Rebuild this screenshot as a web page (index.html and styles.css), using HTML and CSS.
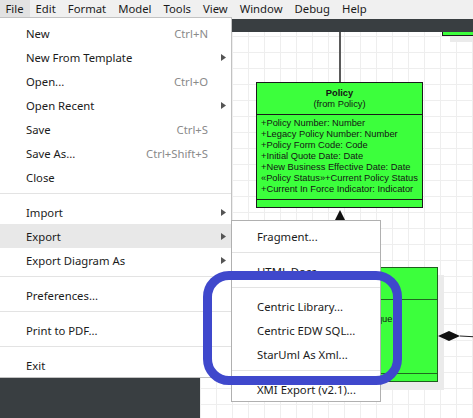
FILE: index.html
```html
<!DOCTYPE html>
<html>
<head>
<meta charset="utf-8">
<link rel="stylesheet" href="styles.css">
</head>
<body>
<div class="app">
  <div class="menubar">
    <span class="mb-item active">File</span>
    <span class="mb-item">Edit</span>
    <span class="mb-item">Format</span>
    <span class="mb-item">Model</span>
    <span class="mb-item">Tools</span>
    <span class="mb-item">View</span>
    <span class="mb-item">Window</span>
    <span class="mb-item">Debug</span>
    <span class="mb-item">Help</span>
  </div>
  <div class="toolbar"></div>
  <div class="workspace">
    <div class="sidepanel"></div>
    <div class="canvas">
      <div class="connector"></div>
      <div class="cls cls-policy">
        <div class="cls-head">
          <div class="cls-name">Policy</div>
          <div>(from Policy)</div>
        </div>
        <div class="cls-attrs">
          <div>+Policy Number: Number</div>
          <div>+Legacy Policy Number: Number</div>
          <div>+Policy Form Code: Code</div>
          <div>+Initial Quote Date: Date</div>
          <div>+New Business Effective Date: Date</div>
          <div>«Policy Status»+Current Policy Status</div>
          <div>+Current In Force Indicator: Indicator</div>
        </div>
        <div class="cls-ops"></div>
      </div>
      <svg class="gen-arrow" width="14" height="14" viewBox="0 0 14 14"><polygon points="7,0 14,14 0,14" fill="#111"/></svg>
      <div class="cls cls-two">
        <div class="cls-head"></div>
        <div class="cls-attrs cls-attrs-two">
          <div class="attr-hidden">&nbsp;</div>
          <div>Unique</div>
        </div>
        <div class="cls-ops"></div>
      </div>
      <svg class="aggregation" width="40" height="12" viewBox="0 0 40 12"><line x1="22" y1="6" x2="40" y2="7" stroke="#222" stroke-width="1"/><polygon points="0,6 11,1 22,6 11,11" fill="#111"/></svg>
      <div class="cls cls-three"></div>
    </div>
  </div>

  <div class="menu file-menu">
    <div class="mitem"><span class="lbl">New</span><span class="sc">Ctrl+N</span></div>
    <div class="mitem"><span class="lbl">New From Template</span><svg class="arr" width="5" height="7" viewBox="0 0 5 7"><polygon points="0,0 5,3.5 0,7" fill="#555"/></svg></div>
    <div class="mitem"><span class="lbl">Open...</span><span class="sc">Ctrl+O</span></div>
    <div class="mitem"><span class="lbl">Open Recent</span><svg class="arr" width="5" height="7" viewBox="0 0 5 7"><polygon points="0,0 5,3.5 0,7" fill="#555"/></svg></div>
    <div class="mitem"><span class="lbl">Save</span><span class="sc">Ctrl+S</span></div>
    <div class="mitem"><span class="lbl">Save As...</span><span class="sc">Ctrl+Shift+S</span></div>
    <div class="mitem"><span class="lbl">Close</span></div>
    <div class="sep"></div>
    <div class="mitem"><span class="lbl">Import</span><svg class="arr" width="5" height="7" viewBox="0 0 5 7"><polygon points="0,0 5,3.5 0,7" fill="#555"/></svg></div>
    <div class="mitem hl"><span class="lbl">Export</span><svg class="arr" width="5" height="7" viewBox="0 0 5 7"><polygon points="0,0 5,3.5 0,7" fill="#555"/></svg></div>
    <div class="mitem"><span class="lbl">Export Diagram As</span><svg class="arr" width="5" height="7" viewBox="0 0 5 7"><polygon points="0,0 5,3.5 0,7" fill="#555"/></svg></div>
    <div class="sep"></div>
    <div class="mitem"><span class="lbl">Preferences...</span></div>
    <div class="sep"></div>
    <div class="mitem"><span class="lbl">Print to PDF...</span></div>
    <div class="sep"></div>
    <div class="mitem"><span class="lbl">Exit</span></div>
  </div>

  <div class="menu sub-menu">
    <div class="mitem"><span class="lbl">Fragment...</span></div>
    <div class="sep"></div>
    <div class="mitem"><span class="lbl">HTML Docs</span></div>
    <div class="sep"></div>
    <div class="mitem"><span class="lbl">Centric Library...</span></div>
    <div class="mitem"><span class="lbl">Centric EDW SQL...</span></div>
    <div class="mitem"><span class="lbl">StarUml As Xml...</span></div>
    <div class="sep"></div>
    <div class="mitem"><span class="lbl">XMI Export (v2.1)...</span></div>
  </div>

  <div class="annotation"></div>
</div>
</body>
</html>
```

FILE: styles.css
```css
* { box-sizing: border-box; margin: 0; padding: 0; }
html, body { width: 473px; height: 418px; overflow: hidden; }
body {
  font-family: "Noto Sans", "Open Sans", sans-serif;
  font-size: 11.3px;
  color: #1b1b1b;
  background: #fff;
}
.app { position: relative; width: 473px; height: 418px; display: flex; flex-direction: column; }

.menubar { height: 19px; background: #f0f0f0; display: flex; align-items: stretch; }
.mb-item { padding: 0 6px; line-height: 18px; }
.mb-item.active { background: #e2e2e2; padding-left: 5.5px; }
.toolbar { height: 13px; background: #393e41; }

.workspace { flex: 1; display: flex; min-height: 0; }
.sidepanel { width: 200px; background: #393e41; }
.canvas {
  flex: 1;
  position: relative;
  overflow: hidden;
  background-color: #fff;
  background-image: linear-gradient(#eeeeee 1px, transparent 1px), linear-gradient(90deg, #eeeeee 1px, transparent 1px);
  background-size: 16px 16px;
  background-position: 0 4px;
}

.connector { position: absolute; left: 139px; top: 0; width: 2px; height: 50px; background: #5a5a5a; }
.gen-arrow { position: absolute; left: 133px; top: 178px; }
.aggregation { position: absolute; left: 238px; top: 298px; }

.cls {
  position: absolute;
  background: #3cff3c;
  border: 1px solid #1a1a1a;
  font-family: "Liberation Sans", Arial, sans-serif;
  font-size: 9.3px;
  color: #141414;
  display: flex;
  flex-direction: column;
}
.cls-head { height: 32px; border-bottom: 1px solid #1a1a1a; text-align: center; padding-top: 5px; line-height: 11px; }
.cls-name { font-weight: bold; }
.cls-attrs { height: 85px; border-bottom: 1px solid #1a1a1a; padding: 3px 0 0 4px; line-height: 11px; white-space: nowrap; }
.cls-ops { flex: 1; }

.cls-policy { left: 56px; top: 50px; width: 167px; height: 126px; }

.cls-two { left: 158px; top: 235px; width: 80px; height: 115px; border-color: #1f5e1f; box-shadow: 6px 8px 0 #ebebeb; }
.cls-two .cls-head, .cls-two .cls-attrs { border-color: #1f6a1f; }
.cls-attrs-two { height: 74px; }

.cls-three { left: 242px; top: -60px; width: 80px; height: 64px; box-shadow: 8px 6px 0 #ebebeb; }

.menu { position: absolute; background: #fff; border: 1px solid #c2c2c2; }
.file-menu { left: -1px; top: 17px; width: 233px; padding-top: 3px; }
.sub-menu { left: 231px; top: 220px; width: 150px; padding-top: 3px; border-color: #b0b0b0; }
.mitem { height: 24px; display: flex; align-items: center; padding: 0 5px 0 26px; white-space: nowrap; }
.sub-menu .mitem { padding-left: 25px; }
.mitem .lbl { flex: 1; }
.mitem .sc { color: #8a8a8a; margin-right: 18px; }
.mitem.hl { background: #e8e8e8; }
.sep { height: 1px; background: #e3e3e3; margin: 4px 0 6px; }

.annotation {
  position: absolute;
  left: 203px;
  top: 271px;
  width: 199px;
  height: 114px;
  border: 9px solid #3f48cc;
  border-radius: 26px;
}
```
